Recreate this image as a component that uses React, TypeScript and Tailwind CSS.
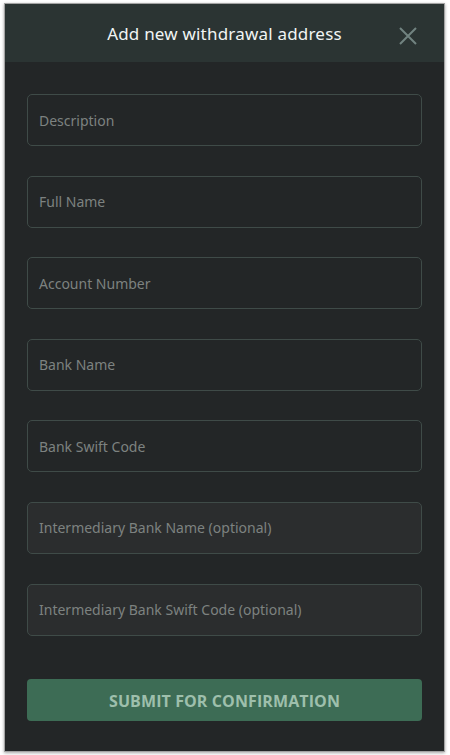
import React from 'react';

const fields = [
  { label: 'Description', filled: false },
  { label: 'Full Name', filled: false },
  { label: 'Account Number', filled: false },
  { label: 'Bank Name', filled: false },
  { label: 'Bank Swift Code', filled: false },
  { label: 'Intermediary Bank Name (optional)', filled: true },
  { label: 'Intermediary Bank Swift Code (optional)', filled: true },
];

const App: React.FC = () => {
  return (
    <div className="w-[450px] h-[755px] bg-white pt-[3px] pl-[4px]">
      <div className="w-[441px] h-[749px] flex flex-col bg-[#232627] border border-[#a3a3a3] shadow-[0_1px_3px_rgba(0,0,0,0.35)] overflow-hidden">
        {/* Header */}
        <div className="relative h-[58px] shrink-0 bg-[#2b3433] flex items-center justify-center">
          <span className="mt-[2px] text-[17px] text-[#f1f4f3] tracking-[0.2px] font-['Noto_Sans',sans-serif]">
            Add new withdrawal address
          </span>
          <button className="absolute right-[27px] top-[23px] text-[#718380]">
            <svg width="18" height="18" viewBox="0 0 18 18" fill="none" stroke="currentColor" strokeWidth={2}>
              <path d="M1 1l16 16M17 1L1 17" />
            </svg>
          </button>
        </div>

        {/* Form */}
        <div className="flex-1 flex flex-col px-[22px] pt-[32px]">
          <div className="flex flex-col gap-[29.6px]">
            {fields.map((f) => (
              <div
                key={f.label}
                className={`h-[52px] rounded-[5px] border border-[#3f4b48] flex items-center px-[11px] ${
                  f.filled ? 'bg-[#2b2d2e]' : 'bg-[#232627]'
                }`}
              >
                <span className="text-[14px] text-[#7d8280] font-['Noto_Sans',sans-serif]">{f.label}</span>
              </div>
            ))}
          </div>

          <button className="mt-[43px] h-[42px] w-full rounded-[4px] bg-[#3d6c55] text-[#9ebfac] text-[16px] font-bold tracking-[0.1px] font-['Open_Sans',sans-serif]">
            <span className="relative top-[1px]">SUBMIT FOR CONFIRMATION</span>
          </button>
        </div>
      </div>
    </div>
  );
};

export default App;
